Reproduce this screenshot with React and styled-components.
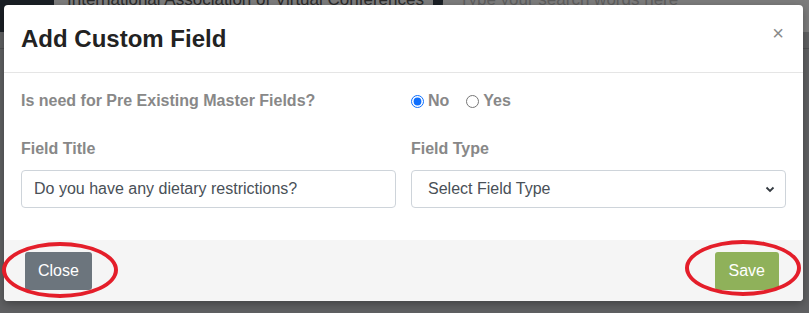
import React, { useState } from 'react'
import styled, { createGlobalStyle } from 'styled-components'

const GlobalStyle = createGlobalStyle`
   html, body {
      margin: 0;
      padding: 0;
      background: #5f6062;
      font-family: "Liberation Sans", Arial, sans-serif;
      overflow: hidden;
   }
`;

const Page = styled.div`
   width: 809px;
   height: 313px;
   position: relative;
   overflow: hidden;
`;

const NavBar = styled.div`
   height: 32px;
   background: #1a1f25;
   display: flex;
   align-items: stretch;
   padding-left: 54px;
   gap: 10px;
`;

const NavSelect = styled.div`
   width: 379px;
   background: #7c7c7c;
   color: #2b2b2b;
   font-size: 17px;
   white-space: nowrap;
   display: flex;
   align-items: flex-start;
   gap: 14px;
   padding: 0 10px 0 13px;
   box-sizing: border-box;
   line-height: 16px;
   margin-top: -8px;
`;

const NavSearch = styled.div`
   flex: 1;
   background: #7c7c7c;
   color: #5e5e5e;
   font-size: 17px;
   white-space: nowrap;
   padding-left: 16px;
   line-height: 16px;
   margin-top: -8px;
`;

const SubBar = styled.div`
   height: 16px;
   border-bottom: 1px solid #4f5052;
`;

const Backdrop = styled.div`
   position: absolute;
   inset: 0;
   padding: 5px 0 0 4px;
`;

const Modal = styled.div`
   width: 799px;
   background: #fff;
   border-radius: 4px;
   box-shadow: 0 3px 9px rgba(0, 0, 0, 0.3);
`;

const Header = styled.div`
   height: 68px;
   display: flex;
   align-items: center;
   justify-content: space-between;
   padding: 0 17px;
   border-bottom: 1px solid #e5e5e5;
   box-sizing: border-box;

   h4 {
      margin: 0;
      font-size: 24px;
      font-weight: bold;
      color: #222;
   }
`;

const CloseX = styled.button`
   background: none;
   border: none;
   color: #8a8a8a;
   font-size: 20px;
   line-height: 1;
   padding: 0 2px 12px 0;
   cursor: pointer;
   font-family: "Liberation Sans", Arial, sans-serif;
`;

const Body = styled.div`
   padding: 18px 17px 32px;
`;

const Row = styled.div`
   display: grid;
   grid-template-columns: 1fr 1fr;
   column-gap: 15px;
   margin-bottom: ${props => props.gap || 0}px;
   align-items: center;
`;

const Label = styled.label`
   font-size: 16px;
   font-weight: bold;
   color: #888;
   line-height: 20px;
   display: block;
`;

const Radios = styled.div`
   display: flex;
   align-items: center;
   gap: 17px;
`;

const RadioLabel = styled.label`
   display: flex;
   align-items: center;
   gap: 4px;
   font-size: 16px;
   font-weight: bold;
   color: #888;
   line-height: 20px;

   input {
      margin: 0;
      width: 13px;
      height: 13px;
      accent-color: #0d6efd;
   }
`;

const Field = styled.div`
   display: flex;
   flex-direction: column;
   gap: 11px;
`;

const Input = styled.input`
   height: 38px;
   border: 1px solid #ced4da;
   border-radius: 4px;
   padding: 0 12px;
   font-size: 16px;
   color: #495057;
   font-family: "Liberation Sans", Arial, sans-serif;
   box-sizing: border-box;
   outline: none;
`;

const Select = styled.div`
   height: 38px;
   border: 1px solid #ced4da;
   border-radius: 4px;
   padding: 0 10px 0 16px;
   font-size: 16px;
   color: #495057;
   box-sizing: border-box;
   display: flex;
   align-items: center;
   justify-content: space-between;
`;

const Footer = styled.div`
   position: relative;
   background: #f5f5f5;
   border-radius: 0 0 4px 4px;
   display: flex;
   justify-content: space-between;
   align-items: center;
   padding: 12px 24px 11px 21px;
`;

const Button = styled.button`
   height: 38px;
   padding: 0 ${props => props.pad || 12}px;
   border: none;
   border-radius: 3px;
   background: ${props => props.color};
   color: #fff;
   font-size: 16px;
   font-family: "Liberation Sans", Arial, sans-serif;
   cursor: pointer;
`;

const Ring = styled.div`
   position: absolute;
   top: ${props => props.top}px;
   left: ${props => props.left}px;
   width: 116px;
   height: 56px;
   border: 4px solid #e41e2a;
   border-radius: 50%;
   box-sizing: border-box;
   pointer-events: none;
`;

const Chevron = () => (
   <svg width="10" height="8" viewBox="0 0 10 8">
      <path d="M1.5 2.5 L5 6 L8.5 2.5" fill="none" stroke="#343a40" strokeWidth="1.8" />
   </svg>
);

const App = () => {
   const [master, setMaster] = useState('no');
   const [title, setTitle] = useState('Do you have any dietary restrictions?');

   return (
      <Page>
         <GlobalStyle />
         <NavBar>
            <NavSelect>
               <span>International Association of Virtual Conferences</span>
               <span>▲</span>
            </NavSelect>
            <NavSearch>Type your search words here</NavSearch>
         </NavBar>
         <SubBar />

         <Backdrop>
            <Modal>
               <Header>
                  <h4>Add Custom Field</h4>
                  <CloseX>×</CloseX>
               </Header>
               <Body>
                  <Row gap={28}>
                     <Label>Is need for Pre Existing Master Fields?</Label>
                     <Radios>
                        <RadioLabel>
                           <input type="radio" name="master" checked={master === 'no'} onChange={() => setMaster('no')} />
                           No
                        </RadioLabel>
                        <RadioLabel>
                           <input type="radio" name="master" checked={master === 'yes'} onChange={() => setMaster('yes')} />
                           Yes
                        </RadioLabel>
                     </Radios>
                  </Row>
                  <Row>
                     <Field>
                        <Label>Field Title</Label>
                        <Input value={title} onChange={(e) => setTitle(e.target.value)} />
                     </Field>
                     <Field>
                        <Label>Field Type</Label>
                        <Select>
                           <span>Select Field Type</span>
                           <Chevron />
                        </Select>
                     </Field>
                  </Row>
               </Body>
               <Footer>
                  <Button color="#6c757d" pad={13}>Close</Button>
                  <Button color="#8fb15a" pad={14}>Save</Button>
                  <Ring top={2} left={-2} />
                  <Ring top={0} left={681} />
               </Footer>
            </Modal>
         </Backdrop>
      </Page>
   )
}

export default App
